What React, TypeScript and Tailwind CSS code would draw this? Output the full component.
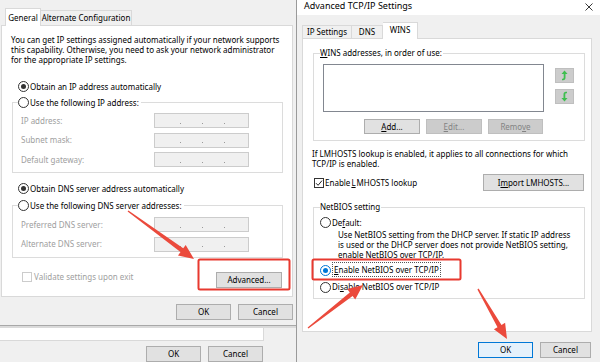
import type { ReactNode } from "react";

function Radio({ checked, blue, children }: { checked?: boolean; blue?: boolean; children: ReactNode }) {
  return (
    <span className="flex h-[11px] items-center gap-[1px]">
      <span
        className={`flex h-[11px] w-[11px] shrink-0 items-center justify-center rounded-full border bg-white ${
          blue ? "border-[#0078d7]" : "border-[#333333]"
        }`}
      >
        {checked && <span className={`h-[5px] w-[5px] rounded-full ${blue ? "bg-[#0078d7]" : "bg-[#333333]"}`} />}
      </span>
      <span className="whitespace-nowrap">{children}</span>
    </span>
  );
}

function IpField() {
  return (
    <div className="flex h-[15px] w-[95px] items-center gap-[21px] border border-[#cccccc] bg-[#f0f0f0] pl-[25px] pt-[5px]">
      <span className="h-[1px] w-[1px] bg-[#9a9a9a]" />
      <span className="h-[1px] w-[1px] bg-[#9a9a9a]" />
      <span className="h-[1px] w-[1px] bg-[#9a9a9a]" />
    </div>
  );
}

function FieldRow({ label }: { label: string }) {
  return (
    <div className="flex h-[15px] items-center">
      <span className="w-[141px] pl-[8px] text-[#a0a0a0]">{label}</span>
      <IpField />
    </div>
  );
}

function Btn({
  children,
  className = "",
  disabled,
  primary,
}: {
  children: ReactNode;
  className?: string;
  disabled?: boolean;
  primary?: boolean;
}) {
  const tone = disabled
    ? "border-[#bfbfbf] bg-[#cccccc] text-[#838383]"
    : primary
      ? "border-[#0078d7] bg-[#e5f1fb] text-black"
      : "border-[#adadad] bg-[#e1e1e1] text-black";
  return (
    <div className={`flex shrink-0 items-center justify-center border ${tone} ${className}`}>
      <span className="whitespace-nowrap">{children}</span>
    </div>
  );
}

function Check({ checked, disabled }: { checked?: boolean; disabled?: boolean }) {
  return (
    <span
      className={`flex h-[10px] w-[10px] shrink-0 items-center justify-center border bg-white ${
        disabled ? "border-[#cccccc]" : "border-[#333333]"
      }`}
    >
      {checked && (
        <svg width="8" height="8" viewBox="0 0 8 8">
          <path d="M1 4.2 L3.1 6.3 L7 1.6" fill="none" stroke="#222" strokeWidth="1" />
        </svg>
      )}
    </span>
  );
}

function MoveBtn({ down }: { down?: boolean }) {
  return (
    <div className="flex h-[15px] w-[19px] items-center justify-center border border-[#bfbfbf] bg-[#cccccc]">
      <svg width="7" height="11" viewBox="0 0 7 11" className={down ? "rotate-180" : ""}>
        <path d="M3.5 0.5 L6.6 4 L4.5 4 L4.5 7.6 Q4.5 10.3 2 10.3 L1 10.3 L1 8.7 L2 8.7 Q2.7 8.7 2.7 7.6 L2.7 4 L0.5 4 Z" fill="#3fbf4f" />
      </svg>
    </div>
  );
}

function arrow(x1: number, y1: number, x2: number, y2: number) {
  const dx = x2 - x1;
  const dy = y2 - y1;
  const len = Math.hypot(dx, dy);
  const ux = dx / len;
  const uy = dy / len;
  const px = -uy;
  const py = ux;
  const headLen = 15;
  const headHalf = 6.5;
  const neck = 2.3;
  const tail = 0.7;
  const bx = x2 - ux * headLen;
  const by = y2 - uy * headLen;
  const pts = [
    [x1 + px * tail, y1 + py * tail],
    [bx + px * neck, by + py * neck],
    [bx + px * headHalf, by + py * headHalf],
    [x2, y2],
    [bx - px * headHalf, by - py * headHalf],
    [bx - px * neck, by - py * neck],
    [x1 - px * tail, y1 - py * tail],
  ];
  return pts.map((p) => p.map((n) => n.toFixed(1)).join(",")).join(" ");
}

function Annotations() {
  return (
    <svg className="pointer-events-none absolute inset-0" width="600" height="362" viewBox="0 0 600 362">
      <rect x="198.5" y="259.5" width="91" height="30" rx="1.5" fill="none" stroke="#e8392f" strokeWidth="2" />
      <rect x="312.5" y="259.5" width="148" height="20" rx="1.5" fill="none" stroke="#e8392f" strokeWidth="2" />
      <polygon points={arrow(128, 211, 194, 259)} fill="#eb4a3c" />
      <polygon points={arrow(308, 328, 363, 285)} fill="#eb4a3c" />
      <polygon points={arrow(478, 289, 507, 339)} fill="#eb4a3c" />
    </svg>
  );
}

function LeftDialog() {
  return (
    <div className="flex h-full w-[297px] shrink-0 flex-col border-r border-[#9a9a9a]">
      <div className="h-[8px]" />
      <div className="flex h-[17px] items-end pl-[5px]">
        <div className="relative z-10 -mb-px flex h-[18px] w-[36px] items-center justify-center border border-b-0 border-[#d9d9d9] bg-white">
          General
        </div>
        <div className="flex h-[15px] w-[91px] items-center justify-center border border-l-0 border-b-0 border-[#d9d9d9] bg-[#f0f0f0]">
          Alternate Configuration
        </div>
      </div>
      <div className="ml-[1px] flex h-[272px] w-[292px] flex-col border border-[#d9d9d9] bg-white pl-[9px] pr-[9px] pt-[9px]">
        <p className="leading-[10px]">
          You can get IP settings assigned automatically if your network supports
          <br />
          this capability. Otherwise, you need to ask your network administrator
          <br />
          for the appropriate IP settings.
        </p>
        <div className="ml-[7px] mt-[16px]">
          <Radio checked>Obtain an IP address automatically</Radio>
        </div>
        <fieldset className="ml-[1px] mt-[5px] w-[271px] border border-[#dcdcdc] pb-[5px]">
          <legend className="ml-[5px] pr-[2px]">
            <Radio>Use the following IP address:</Radio>
          </legend>
          <div className="flex flex-col gap-[4.5px] pt-[5px]">
            <FieldRow label="IP address:" />
            <FieldRow label="Subnet mask:" />
            <FieldRow label="Default gateway:" />
          </div>
        </fieldset>
        <div className="ml-[7px] mt-[10px]">
          <Radio checked>Obtain DNS server address automatically</Radio>
        </div>
        <fieldset className="ml-[1px] mt-[6px] w-[271px] border border-[#dcdcdc] pb-[5px]">
          <legend className="ml-[5px] pr-[2px]">
            <Radio>Use the following DNS server addresses:</Radio>
          </legend>
          <div className="flex flex-col gap-[4.5px] pt-[6px]">
            <FieldRow label="Preferred DNS server:" />
            <FieldRow label="Alternate DNS server:" />
          </div>
        </fieldset>
        <div className="mt-[13px] flex items-start justify-between pl-[11px] pr-[1px]">
          <span className="mt-[1px] flex items-center gap-[2px] text-[#a0a0a0]">
            <Check disabled />
            Validate settings upon exit
          </span>
          <Btn className="mt-[1px] h-[16px] w-[66px]">Advanced...</Btn>
        </div>
      </div>
      <div className="mt-[7px] flex justify-end gap-[7px] pr-[3px]">
        <Btn className="h-[16px] w-[55px]">OK</Btn>
        <Btn className="h-[16px] w-[55px]">Cancel</Btn>
      </div>
      <div className="mt-[5px] h-[1px] bg-[#a8a8a8]" />
      <div className="h-[2px] bg-[#dadada]" />
      <div className="h-[13px] w-[264px] border-b border-r border-[#d9d9d9] bg-white" />
      <div className="mt-[5px] flex justify-end gap-[7px] pr-[33px]">
        <Btn className="h-[16px] w-[55px]">OK</Btn>
        <Btn className="h-[16px] w-[55px]">Cancel</Btn>
      </div>
    </div>
  );
}

function RightDialog() {
  return (
    <div className="flex h-full w-[303px] shrink-0 flex-col">
      <div className="flex h-[15px] items-start justify-between bg-white pl-[7px] pr-[7px] pt-[1px]">
        <span className="text-[9px] leading-[10px]">Advanced TCP/IP Settings</span>
        <svg width="8" height="8" viewBox="0 0 8 8" className="mt-[2px]">
          <path d="M0.5 0.5 L7.5 7.5 M7.5 0.5 L0.5 7.5" stroke="#222" strokeWidth="0.9" />
        </svg>
      </div>
      <div className="mt-[7px] flex h-[16px] items-end pl-[5px]">
        <div className="flex h-[13px] w-[50px] items-center justify-center border border-b-0 border-[#d9d9d9] bg-[#f0f0f0]">
          IP Settings
        </div>
        <div className="flex h-[13px] w-[31px] items-center justify-center border border-l-0 border-b-0 border-[#d9d9d9] bg-[#f0f0f0]">
          DNS
        </div>
        <div className="relative z-10 -mb-px flex h-[17px] w-[35px] items-center justify-center border border-b-0 border-l-0 border-[#d9d9d9] bg-white pb-[2px]">
          WINS
        </div>
      </div>
      <div className="ml-[5px] flex h-[294px] w-[290px] flex-col border border-[#d9d9d9] bg-white pt-[9px]">
        <fieldset className="ml-[10px] w-[272px] border border-[#dcdcdc] pb-[6px]">
          <legend className="ml-[6px] pr-[1px] leading-[10px]">
            <span className="underline">W</span>INS addresses, in order of use:
          </legend>
          <div className="flex pl-[9px] pt-[6px]">
            <div className="h-[48px] w-[221px] border border-[#828790] bg-white" />
            <div className="ml-[11px] flex flex-col gap-[6px] pt-[4px]">
              <MoveBtn />
              <MoveBtn down />
            </div>
          </div>
          <div className="ml-[9px] mt-[7px] flex w-[220px] justify-end gap-[6px]">
            <Btn className="h-[15px] w-[56px]">
              <span className="underline">A</span>dd...
            </Btn>
            <Btn disabled className="h-[15px] w-[56px]">
              <span className="underline">E</span>dit...
            </Btn>
            <Btn disabled className="h-[15px] w-[55px]">
              Remo<span className="underline">v</span>e
            </Btn>
          </div>
        </fieldset>
        <p className="ml-[9px] mt-[8px] leading-[10px]">
          If LMHOSTS lookup is enabled, it applies to all connections for which
          <br />
          TCP/IP is enabled.
        </p>
        <div className="mt-[5px] flex items-center justify-between pl-[11px] pr-[7px]">
          <span className="flex items-center gap-[1px]">
            <Check checked />
            Enable <span className="underline">L</span>MHOSTS lookup
          </span>
          <Btn className="h-[17px] w-[101px]">
            I<span className="underline">m</span>port LMHOSTS...
          </Btn>
        </div>
        <fieldset className="ml-[10px] mt-[11px] w-[272px] border border-[#dcdcdc] pb-[5px]">
          <legend className="ml-[6px] pr-[1px] leading-[10px]">NetBIOS setting</legend>
          <div className="pl-[6px] pt-[5px]">
            <Radio>
              De<span className="underline">f</span>ault:
            </Radio>
            <p className="mt-[2px] pl-[18px] leading-[10px]">
              Use NetBIOS setting from the DHCP server. If static IP address
              <br />
              is used or the DHCP server does not provide NetBIOS setting,
              <br />
              enable NetBIOS over TCP/IP.
            </p>
            <div className="mt-[3px] flex h-[14px] items-center">
              <Radio checked blue>
                <span className="border border-dotted border-[#555] px-[1px] py-[1px]">
                  <span className="underline">E</span>nable NetBIOS over TCP/IP
                </span>
              </Radio>
            </div>
            <div className="mt-[4.5px]">
              <Radio>
                Di<span className="underline">s</span>able NetBIOS over TCP/IP
              </Radio>
            </div>
          </div>
        </fieldset>
      </div>
      <div className="mt-[10px] flex gap-[7px] pl-[181px]">
        <Btn primary className="h-[16px] w-[55px]">
          OK
        </Btn>
        <Btn className="h-[16px] w-[51px]">Cancel</Btn>
      </div>
    </div>
  );
}

export default function App() {
  return (
    <div className="relative flex h-[362px] w-[600px] overflow-hidden bg-[#f0f0f0] font-['Noto_Sans',sans-serif] text-[8px] leading-[10px] text-black">
      <LeftDialog />
      <RightDialog />
      <Annotations />
    </div>
  );
}
